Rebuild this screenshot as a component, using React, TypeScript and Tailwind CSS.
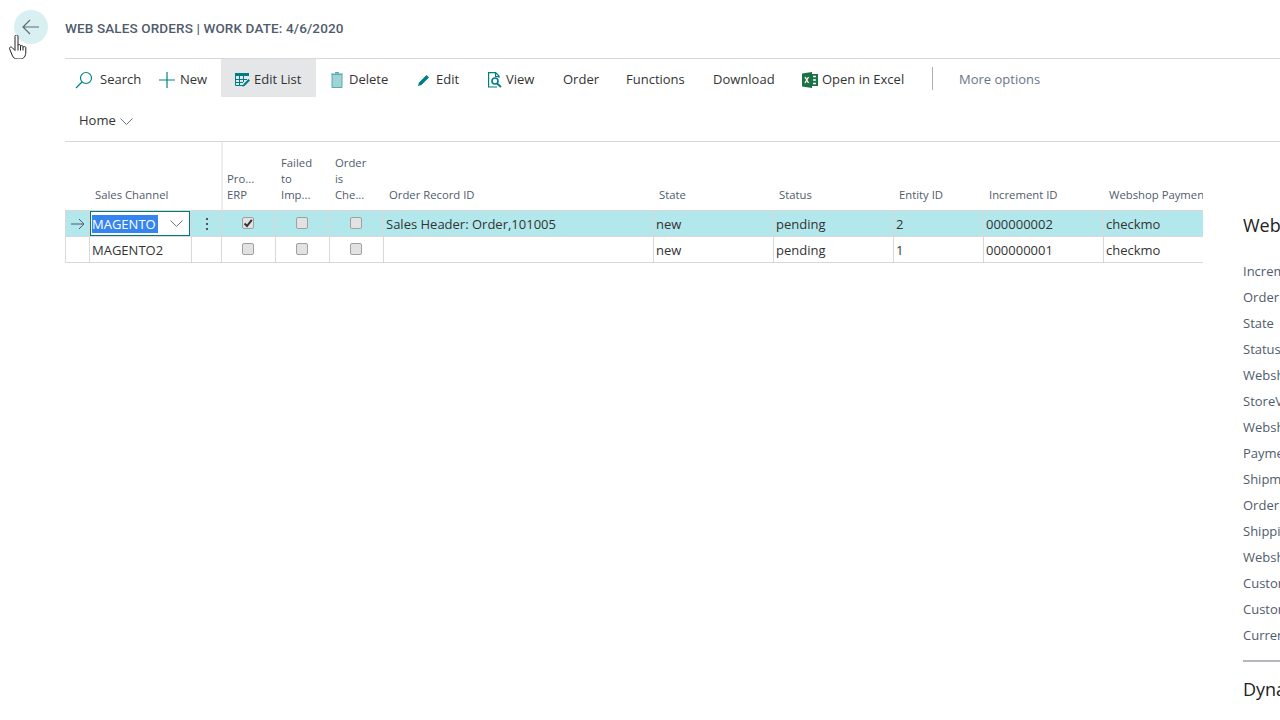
const font = "font-['Open_Sans','Noto_Sans',sans-serif]";

const rows = [
  { channel: "MAGENTO", record: "Sales Header: Order,101005", entity: "2", inc: "000000002", checked: true },
  { channel: "MAGENTO2", record: "", entity: "1", inc: "000000001", checked: false },
];

const details = [
  "Increment ID",
  "Order Record ID",
  "State",
  "Status",
  "Webshop Payment",
  "StoreView",
  "Webshop Order",
  "Payment Method",
  "Shipment Method",
  "Order Date",
  "Shipping Amount",
  "Webshop Total",
  "Customer Name",
  "Customer Email",
  "Currency Code",
];

const headCols =
  "grid grid-cols-[24px_102px_30px_54px_54px_54px_270px_120px_120px_90px_120px_100px]";
const rowCols =
  "grid grid-cols-[24px_102px_30px_54px_54px_54px_270px_120px_120px_90px_120px_99px]";

function Box({ checked }: { checked?: boolean }) {
  return (
    <span className="w-[12px] h-[12px] mb-[1px] mr-[2px] rounded-[2px] border border-[#a0a0a0] bg-[#e2e2e2] flex items-center justify-center">
      {checked && (
        <svg width="10" height="10" viewBox="0 0 10 10">
          <path d="M1.5 5.5 L4 8 L8.8 1.8" fill="none" stroke="#333" strokeWidth="2" />
        </svg>
      )}
    </span>
  );
}

function Chevron({ className }: { className: string }) {
  return (
    <svg className={className} width="13" height="7" viewBox="0 0 13 7" fill="none" stroke="#6b7585">
      <path d="M.5.5l6 6 6-6" />
    </svg>
  );
}

function Head({ children, border }: { children?: React.ReactNode; border?: boolean }) {
  return (
    <div
      className={`flex items-end pb-[7px] text-[11.3px] leading-[16px] text-[#505c6d] whitespace-nowrap overflow-hidden ${
        border ? "border-l-2 border-[#eeeeee] pl-[4px]" : "pl-[6px]"
      }`}
    >
      <div>{children}</div>
    </div>
  );
}

function Cell({
  children,
  center,
  last,
  flush,
}: {
  children?: React.ReactNode;
  center?: boolean;
  last?: boolean;
  flush?: boolean;
}) {
  return (
    <div
      className={`h-[26px] border-b border-[#d8d8d8] flex items-center text-[13px] text-[#333] whitespace-nowrap overflow-hidden ${
        last ? "" : "border-r"
      } ${center ? "justify-center" : flush ? "pl-[1px]" : "pl-[2px] pt-[2px]"}`}
    >
      {children}
    </div>
  );
}

function Tool({ icon, label, className }: { icon?: React.ReactNode; label: string; className: string }) {
  return (
    <div className={`h-[38px] pt-[4px] flex items-center shrink-0 text-[#333] ${className}`}>
      {icon}
      <span>{label}</span>
    </div>
  );
}

export default function App() {
  return (
    <div className={`relative w-[1280px] h-[720px] overflow-hidden bg-white flex ${font}`}>
      <div className="w-[65px] shrink-0 pt-[10px] pl-[14px]">
        <div className="w-[34px] h-[34px] rounded-full bg-[#d9f0f2] flex items-center justify-center">
          <svg width="18" height="16" viewBox="0 0 18 16" fill="none" stroke="#5f6b78" strokeWidth="1.2">
            <path d="M17 8H1M8 1L1 8l7 7" />
          </svg>
        </div>
      </div>

      <div className="flex-1 min-w-0">
        <div className="h-[59px] pt-[19px] text-[13.5px] tracking-[0.13px] leading-[18px] font-['Roboto',sans-serif] font-medium text-[#505c6d] border-b border-[#d8d8d8]">
          WEB SALES ORDERS | WORK DATE: 4/6/2020
        </div>

        <div className="flex text-[13px]">
          <Tool
            className="w-[94px] pl-[10px] gap-[7px]"
            label="Search"
            icon={
              <svg width="18" height="18" viewBox="0 0 18 18" fill="none" stroke="#008489" strokeWidth="1.2">
                <circle cx="11" cy="7" r="5.5" />
                <path d="M7 11L1 17" />
              </svg>
            }
          />
          <Tool
            className="w-[62px] gap-[5px]"
            label="New"
            icon={
              <svg width="16" height="16" viewBox="0 0 16 16" stroke="#008489" strokeWidth="1.2">
                <path d="M8 0v16M0 8h16" />
              </svg>
            }
          />
          <Tool
            className="w-[95px] pl-[14px] gap-[4px] bg-[#e5e6e8]"
            label="Edit List"
            icon={
              <svg width="15" height="15" viewBox="0 0 15 15" fill="none">
                <path d="M0 0h14v3H0z" fill="#007d84" />
                <path d="M.5 3v9.500H9M.5 6.500H12M.5 9.500H8M4.500 3v9.500M8.500 3v6" stroke="#007d84" />
                <path d="M7.500 14l1-3 5-5 1.500 1.500-5 5z" fill="#007d84" />
              </svg>
            }
          />
          <Tool
            className="w-[102px] pl-[15px] gap-[6px]"
            label="Delete"
            icon={
              <svg width="12" height="16" viewBox="0 0 12 16">
                <path d="M1 2.500h10v13H1z" fill="#9fd3d6" stroke="#5aa9ae" />
                <path d="M0 2h12M4 .7h4" stroke="#5aa9ae" strokeWidth="1.2" />
              </svg>
            }
          />
          <Tool
            className="w-[70px] gap-[6px]"
            label="Edit"
            icon={
              <svg width="12" height="12" viewBox="0 0 12 12">
                <path d="M0 12l1-3.500L8.500 1l2.500 2.500L3.500 11z" fill="#007d84" />
              </svg>
            }
          />
          <Tool
            className="w-[75px] gap-[4px]"
            label="View"
            icon={
              <svg width="14" height="16" viewBox="0 0 14 16" fill="none" stroke="#007d84" strokeWidth="1.2">
                <path d="M9 15H.6V.6h7L11 4v2M7.500 1v3.500H11" />
                <circle cx="7" cy="9" r="3" strokeWidth="1.6" />
                <path d="M9 11.500l4 3.500" strokeWidth="1.800" />
              </svg>
            }
          />
          <Tool className="w-[63px]" label="Order" />
          <Tool className="w-[87px]" label="Functions" />
          <Tool className="w-[89px]" label="Download" />
          <Tool
            className="w-[130px] gap-[4px]"
            label="Open in Excel"
            icon={
              <svg width="16" height="16" viewBox="0 0 16 16">
                <path d="M0 1.500L10 0v16L0 14.500z" fill="#1e7145" />
                <path d="M10 2h6v12h-6z" fill="#1e7145" />
                <path d="M11 4.500h3M11 8h3M11 11.500h3" stroke="#fff" strokeWidth="1.500" />
                <path d="M3 5l3.500 6M6.500 5L3 11" stroke="#fff" strokeWidth="1.300" />
              </svg>
            }
          />
          <div className="h-[38px] flex items-center shrink-0">
            <div className="w-px h-[23px] bg-[#a9afb8]" />
          </div>
          <div className="h-[38px] pt-[4px] flex items-center ml-[26px] text-[#6b7585]">More options</div>
        </div>

        <div className="h-[45px] border-b border-[#d8d8d8] pl-[14px] pt-[13px] flex items-start gap-[4px] text-[13px] leading-[20px] text-[#333]">
          Home
          <Chevron className="mt-[8px]" />
        </div>

        <div className="flex">
          <div className="w-[1138px] shrink-0">
            <div className={`${headCols} h-[68px]`}>
              <Head />
              <Head>Sales Channel</Head>
              <Head />
              <Head border>
                Pro...
                <br />
                ERP
              </Head>
              <Head>
                Failed
                <br />
                to
                <br />
                Imp...
              </Head>
              <Head>
                Order
                <br />
                is
                <br />
                Che...
              </Head>
              <Head>Order Record ID</Head>
              <Head>State</Head>
              <Head>Status</Head>
              <Head>Entity ID</Head>
              <Head>Increment ID</Head>
              <Head>Webshop Payment</Head>
            </div>

            <div className="border-t border-l border-[#d8d8d8]">
              {rows.map((r, i) => (
                <div key={r.channel} className={`${rowCols} ${i === 0 ? "bg-[#b2e8ec]" : ""}`}>
                  <Cell center>
                    {i === 0 && (
                      <svg width="14" height="12" viewBox="0 0 14 12" fill="none" stroke="#4d5a66">
                        <path d="M0 6h13M8 1l5 5-5 5" />
                      </svg>
                    )}
                  </Cell>
                  {i === 0 ? (
                    <Cell flush>
                      <div className="w-[100px] h-[25px] -ml-[1px] border border-[#00797f] bg-white flex items-center pl-[1px]">
                        <span className="w-[66px] overflow-hidden bg-[#3584f0] text-white leading-[18px]">
                          {r.channel}
                        </span>
                        <Chevron className="ml-[12px]" />
                      </div>
                    </Cell>
                  ) : (
                    <Cell>{r.channel}</Cell>
                  )}
                  <Cell center>
                    {i === 0 && (
                      <svg width="4" height="14" viewBox="0 0 4 14" fill="#333">
                        <circle cx="2" cy="2" r="1.100" />
                        <circle cx="2" cy="7" r="1.100" />
                        <circle cx="2" cy="12" r="1.100" />
                      </svg>
                    )}
                  </Cell>
                  <Cell center>
                    <Box checked={r.checked} />
                  </Cell>
                  <Cell center>
                    <Box />
                  </Cell>
                  <Cell center>
                    <Box />
                  </Cell>
                  <Cell>{r.record}</Cell>
                  <Cell>new</Cell>
                  <Cell>pending</Cell>
                  <Cell>{r.entity}</Cell>
                  <Cell>{r.inc}</Cell>
                  <Cell last>checkmo</Cell>
                </div>
              ))}
            </div>
          </div>

          <div className="w-[300px] shrink-0 ml-[40px] pt-[71px]">
            <div className="text-[18px] leading-[24px] text-[#222] whitespace-nowrap">Webshop Order Details</div>
            <div className="mt-[24px] flex flex-col gap-[6px]">
              {details.map((d, i) => (
                <div key={i} className="h-[20px] leading-[20px] text-[13px] text-[#505c6d] whitespace-nowrap">
                  {d}
                </div>
              ))}
            </div>
            <div className="mt-[15px] h-[2px] bg-[#b4b8bd]" />
            <div className="mt-[15px] text-[18px] leading-[24px] font-medium text-[#222] whitespace-nowrap">
              Dynamics 365
            </div>
          </div>
        </div>
      </div>

      <svg className="absolute left-[9px] top-[35px]" width="18" height="24" viewBox="0 0 18 24" fill="#fff" stroke="#222" strokeWidth="1">
        <path d="M6 1.500c0-2 3-2 3 0v9c0-1.200 2.500-1.200 2.500 0v1c0-1.200 2.500-1.200 2.500 0v1c0-1.200 2.800-1.200 2.800 0v4.500c0 4-2 7-5.500 7H8c-2.500 0-3.500-1.500-4.500-3L.7 14c-.9-1.600 1.200-2.800 2.600-1.300L6 15.500z" />
        <path d="M9 10.500v5M11.500 11.500v4M14 12.500v3" fill="none" />
      </svg>
    </div>
  );
}
